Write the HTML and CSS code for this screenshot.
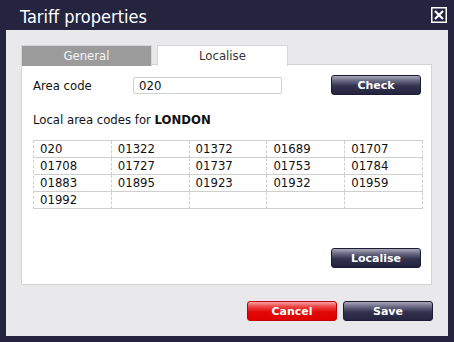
FILE: index.html
```html
<!DOCTYPE html>
<html>
<head>
	<title>Tariff properties</title>
	<link rel="stylesheet" href="styles.css">
</head>
<body>
	<div class="header">
		<span class="title">Tariff properties</span>
		<span class="close">
			<svg width="16" height="16" viewBox="0 0 16 16">
				<rect x="0.75" y="0.75" width="14.5" height="14.5" fill="none" stroke="#fff" stroke-width="1.5"/>
				<path d="M4 4 L12 12 M12 4 L4 12" stroke="#fff" stroke-width="2.2"/>
			</svg>
		</span>
	</div>
	<div class="dialog">
		<div class="tabs">
			<div class="tab">General</div>
			<div class="tab active">Localise</div>
		</div>
		<div class="box">
			<div class="row">
				<label class="lbl">Area code</label>
				<input type="text" class="code" value="020">
				<button class="btn check">Check</button>
			</div>
			<p class="local">Local area codes for <b>LONDON</b></p>
			<div class="codes">
				<div class="cell">020</div>
				<div class="cell">01322</div>
				<div class="cell">01372</div>
				<div class="cell">01689</div>
				<div class="cell">01707</div>
				<div class="cell">01708</div>
				<div class="cell">01727</div>
				<div class="cell">01737</div>
				<div class="cell">01753</div>
				<div class="cell">01784</div>
				<div class="cell">01883</div>
				<div class="cell">01895</div>
				<div class="cell">01923</div>
				<div class="cell">01932</div>
				<div class="cell">01959</div>
				<div class="cell">01992</div>
				<div class="cell"></div>
				<div class="cell"></div>
				<div class="cell"></div>
				<div class="cell"></div>
			</div>
			<div class="bottom">
				<button class="btn">Localise</button>
			</div>
		</div>
		<div class="actions">
			<button class="btn cancel">Cancel</button>
			<button class="btn">Save</button>
		</div>
	</div>
</body>
</html>
```

FILE: styles.css
```css
body {
	margin: 0;
	width: 454px;
	height: 342px;
	background-color: #25243f;
	font-family: "DejaVu Sans Condensed", "DejaVu Sans", sans-serif;
	font-size: 12px;
	color: #111;
	display: flex;
	flex-direction: column;
}
.header {
	height: 30px;
	display: flex;
	justify-content: space-between;
	align-items: flex-start;
	padding: 0 7px 0 20px;
}
.title {
	color: #fff;
	font-size: 18px;
	line-height: 19px;
	margin-top: 7px;
}
.close {
	margin-top: 7px;
	height: 16px;
}
.dialog {
	margin: 0 6px 6px 6px;
	flex: 1;
	background-color: #e9e8eb;
	padding: 15px 16px 0 15px;
	display: flex;
	flex-direction: column;
}
.tabs {
	display: flex;
	gap: 5px;
	height: 20px;
	margin-bottom: -1px;
	position: relative;
	z-index: 1;
}
.tab {
	width: 131px;
	box-sizing: border-box;
	height: 21px;
	border: 1px solid #d6d6d6;
	border-bottom: none;
	background-color: #9b9b9b;
	color: #f4f4f4;
	text-align: center;
	font-size: 13px;
	line-height: 19px;
}
.tab.active {
	background-color: #fff;
	color: #333;
}
.box {
	height: 221px;
	box-sizing: border-box;
	border: 1px solid #d3d3d3;
	background-color: #fff;
	padding: 10px 10px 16px 11px;
	display: flex;
	flex-direction: column;
}
.row {
	display: flex;
	align-items: center;
	height: 20px;
}
.lbl {
	width: 100px;
	font-size: 13px;
}
.code {
	width: 149px;
	height: 17px;
	box-sizing: border-box;
	border: 1px solid #d0d0d8;
	border-radius: 2px;
	padding: 0 5px;
	font-family: inherit;
	font-size: 13px;
	color: #111;
}
.btn {
	width: 90px;
	height: 20px;
	box-sizing: border-box;
	border: 1px solid #1c1b33;
	border-radius: 3px;
	background: linear-gradient(#a9a9b9 0%, #6c6b85 25%, #34334f 55%, #25243f 100%);
	color: #fff;
	font-family: "DejaVu Sans", sans-serif;
	font-weight: bold;
	font-size: 11px;
	padding: 0;
}
.check {
	margin-left: auto;
}
.local {
	margin: 17px 0 12px 0;
	font-size: 13px;
	line-height: 16px;
}
.codes {
	width: 390px;
	display: grid;
	grid-template-columns: repeat(5, 1fr);
	border-top: 1px solid #cfcfcf;
	border-left: 1px dashed #cfcfcf;
	box-sizing: border-box;
}
.cell {
	height: 17px;
	box-sizing: border-box;
	border-right: 1px dashed #cfcfcf;
	border-bottom: 1px solid #cfcfcf;
	padding-left: 6px;
	font-size: 13px;
	line-height: 16px;
}
.bottom {
	margin-top: auto;
	display: flex;
	justify-content: flex-end;
}
.actions {
	display: flex;
	justify-content: flex-end;
	gap: 6px;
	margin-top: 16px;
	margin-right: -1px;
}
.cancel {
	border-color: #c40000;
	background: linear-gradient(#f5a0a0 0%, #ec4848 25%, #e20808 55%, #e00000 100%);
}
```
